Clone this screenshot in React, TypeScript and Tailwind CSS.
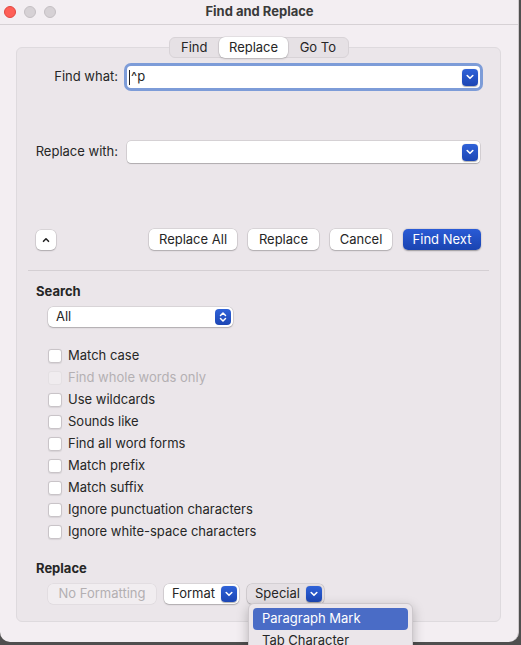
import React from 'react';

const font = { fontFamily: 'Inter, "Noto Sans", "Liberation Sans", sans-serif' };

const Chevron: React.FC<{ className?: string }> = ({ className }) => (
  <span
    className={`flex items-center justify-center rounded-[4px] bg-gradient-to-b from-[#2f62d8] to-[#1c46b4] shadow-[0_0.5px_1px_rgba(0,0,0,0.3)] ${className ?? ''}`}
  >
    <svg width="8" height="6" viewBox="0 0 8 6" fill="none">
      <path d="M1.2 1.5 L4 4.3 L6.8 1.5" stroke="white" strokeWidth="1.6" strokeLinecap="round" strokeLinejoin="round" />
    </svg>
  </span>
);

const UpDown: React.FC = () => (
  <span className="flex h-[16px] w-[16px] items-center justify-center rounded-[4px] bg-gradient-to-b from-[#2f62d8] to-[#1c46b4]">
    <svg width="8" height="12" viewBox="0 0 8 12" fill="none">
      <path d="M1.5 4.5 L4 2 L6.5 4.5 M1.5 7.5 L4 10 L6.5 7.5" stroke="white" strokeWidth="1.5" strokeLinecap="round" strokeLinejoin="round" />
    </svg>
  </span>
);

const Btn: React.FC<{ w: string; children: React.ReactNode; primary?: boolean }> = ({ w, children, primary }) => (
  <button
    className={`flex h-[21px] items-center justify-center rounded-[5px] text-[13px] ${w} ${
      primary
        ? 'bg-gradient-to-b from-[#2a5bd6] to-[#1a44b0] text-white shadow-[0_0.5px_1.5px_rgba(0,0,0,0.35)]'
        : 'bg-white text-[#262626] shadow-[0_0_0_0.5px_rgba(0,0,0,0.15),0_1px_1.5px_rgba(0,0,0,0.2)]'
    }`}
  >
    {children}
  </button>
);

const options = [
  { label: 'Match case' },
  { label: 'Find whole words only', disabled: true },
  { label: 'Use wildcards' },
  { label: 'Sounds like' },
  { label: 'Find all word forms' },
  { label: 'Match prefix' },
  { label: 'Match suffix' },
  { label: 'Ignore punctuation characters' },
  { label: 'Ignore white-space characters' },
];

export default function App() {
  return (
    <div className="relative h-[645px] w-[521px] overflow-hidden bg-[#4f4f4f] text-[#262626]" style={font}>
      <div className="h-[642px] w-[519px] rounded-b-[10px] border-r border-[#cfcacd] bg-[#f3eef2]">
        {/* Title bar */}
        <div className="relative flex h-[25px] items-center gap-[8px] border-b border-[#d6d1d5] pl-[4px]">
          <span className="h-[12px] w-[12px] rounded-full border border-[#e2463f] bg-[#fe5f57]" />
          <span className="h-[12px] w-[12px] rounded-full border border-[#c4bfc3] bg-[#d6d1d5]" />
          <span className="h-[12px] w-[12px] rounded-full border border-[#c4bfc3] bg-[#d6d1d5]" />
          <div className="absolute inset-0 flex items-center justify-center pl-[1px] text-[13px] font-bold text-[#3a3a3a]">
            Find and Replace
          </div>
        </div>

        {/* Tabs */}
        <div className="relative z-10 mt-[12px] flex w-[501px] justify-center pl-[16px]">
          <div className="flex h-[21px] w-[180px] items-center rounded-[6px] border border-[#d8d3d7] bg-[#e6e1e5] text-[13px]">
            <span className="flex w-[50px] justify-center">Find</span>
            <span className="flex h-[21px] w-[70px] items-center justify-center rounded-[6px] bg-white shadow-[0_0_0_0.5px_rgba(0,0,0,0.12),0_1px_2px_rgba(0,0,0,0.18)]">
              Replace
            </span>
            <span className="flex w-[60px] justify-center">Go To</span>
          </div>
        </div>

        {/* Group box */}
        <div className="-mt-[11px] ml-[16px] h-[575px] w-[485px] rounded-[6px] border border-[#dedade] bg-[#ebe6ea]">
          {/* Find what */}
          <div className="mt-[18px] flex h-[22px] items-center">
            <span className="w-[101px] text-right text-[13px]">Find what:</span>
            <div className="ml-[9px] flex h-[22px] w-[353px] items-center justify-between rounded-[4px] bg-white pl-[2px] pr-[2px] shadow-[0_0_0_3px_#7d9cd8]">
              <span className="flex items-center text-[13px]">
                <span className="mr-[1px] h-[15px] w-px bg-[#222]" />^p
              </span>
              <Chevron className="h-[17px] w-[16px]" />
            </div>
          </div>

          {/* Replace with */}
          <div className="mt-[53px] flex h-[22px] items-center">
            <span className="w-[101px] text-right text-[13px]">Replace with:</span>
            <div className="ml-[9px] flex h-[22px] w-[353px] items-center justify-end rounded-[4px] bg-white pr-[2px] shadow-[0_0_0_0.5px_rgba(0,0,0,0.18),0_1px_1px_rgba(0,0,0,0.18)]">
              <Chevron className="h-[17px] w-[16px]" />
            </div>
          </div>

          {/* Buttons */}
          <div className="mt-[66px] flex h-[21px] items-center pl-[19px] pr-[19px]">
            <button className="flex h-[20px] w-[20px] items-center justify-center rounded-[5px] bg-white shadow-[0_0_0_0.5px_rgba(0,0,0,0.15),0_1px_1.5px_rgba(0,0,0,0.2)]">
              <svg width="8" height="6" viewBox="0 0 8 6" fill="none">
                <path d="M1.5 4.3 L4 1.8 L6.5 4.3" stroke="#222" strokeWidth="1.6" strokeLinecap="round" strokeLinejoin="round" />
              </svg>
            </button>
            <div className="flex-1" />
            <div className="flex gap-[11px]">
              <Btn w="w-[88px]">Replace All</Btn>
              <Btn w="w-[71px]">Replace</Btn>
              <Btn w="w-[62px]">Cancel</Btn>
              <Btn w="w-[78px]" primary>
                Find Next
              </Btn>
            </div>
          </div>

          <div className="mx-[11px] mt-[20px] h-px bg-[#d4cfd3]" />

          {/* Search */}
          <div className="mt-[12px] pl-[19px] text-[13px] font-bold leading-[16px]">Search</div>
          <div className="ml-[31px] mt-[8px] flex h-[20px] w-[185px] items-center justify-between rounded-[5px] bg-white pl-[8px] pr-[2px] text-[13px] shadow-[0_0_0_0.5px_rgba(0,0,0,0.15),0_1px_1.5px_rgba(0,0,0,0.2)]">
            All
            <UpDown />
          </div>

          <div className="ml-[31px] mt-[18px] flex flex-col">
            {options.map(o => (
              <label key={o.label} className="flex h-[22px] items-center gap-[6px] text-[13px]">
                <span
                  className={`h-[14px] w-[14px] rounded-[3px] border ${
                    o.disabled ? 'border-[#e4e0e3] bg-[#f0ecef]' : 'border-[#c9c4c8] bg-white shadow-[0_0.5px_1px_rgba(0,0,0,0.08)]'
                  }`}
                />
                <span className={o.disabled ? 'text-[#b4b0b3]' : ''}>{o.label}</span>
              </label>
            ))}
          </div>

          {/* Replace */}
          <div className="mt-[17px] pl-[19px] text-[13px] font-bold leading-[16px]">Replace</div>
          <div className="ml-[31px] mt-[8px] flex h-[20px] items-center gap-[8px] text-[13px]">
            <span className="flex h-[20px] w-[108px] items-center justify-center rounded-[5px] bg-[#f1edf0] text-[#b3afb2] shadow-[0_0_0_0.5px_rgba(0,0,0,0.07)]">
              No Formatting
            </span>
            <span className="flex h-[20px] w-[75px] items-center justify-between rounded-[5px] bg-white pl-[8px] pr-[2px] shadow-[0_0_0_0.5px_rgba(0,0,0,0.15),0_1px_1.5px_rgba(0,0,0,0.2)]">
              Format
              <Chevron className="h-[16px] w-[16px]" />
            </span>
            <span className="flex h-[20px] w-[77px] items-center justify-between rounded-[5px] bg-[#e5e0e4] pl-[8px] pr-[2px] shadow-[0_0_0_0.5px_rgba(0,0,0,0.18),0_1px_1.5px_rgba(0,0,0,0.15)]">
              Special
              <Chevron className="h-[16px] w-[16px]" />
            </span>
          </div>
        </div>
      </div>

      {/* Special menu */}
      <div className="absolute left-[248px] top-[603px] h-[60px] w-[165px] rounded-[6px] border border-[#cdc8cc] bg-[#ebe6ea] px-[4px] pt-[4px] text-[13px] shadow-[0_4px_12px_rgba(0,0,0,0.25)]">
        <div className="flex h-[22px] items-center rounded-[4px] bg-[#4a6cc6] pl-[9px] text-white">Paragraph Mark</div>
        <div className="flex h-[22px] items-center pl-[9px]">Tab Character</div>
      </div>
    </div>
  );
}
